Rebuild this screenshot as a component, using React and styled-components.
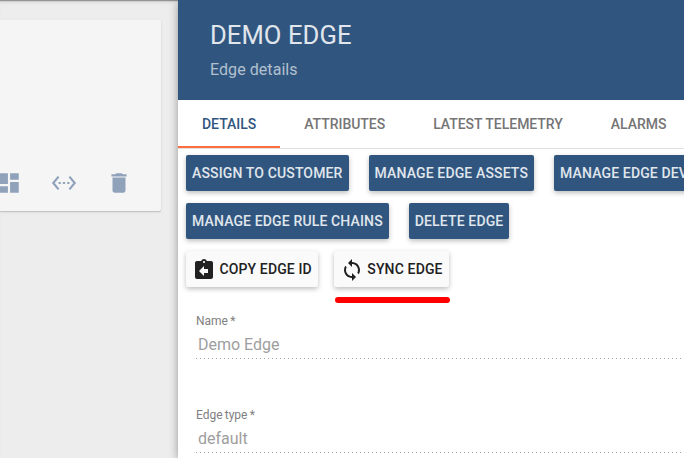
import React from 'react';
import styled, { createGlobalStyle } from 'styled-components';

const PRIMARY = '#305680';

const GlobalStyle = createGlobalStyle`
  *, *::before, *::after { box-sizing: border-box; }
  html, body { margin: 0; height: 100%; overflow: hidden; }
  body { font-family: Roboto, "Liberation Sans", sans-serif; background: #ededed; }
`;

const Page = styled.div`
  display: flex;
  height: 458px;
  width: 684px;
  overflow: hidden;
  background: #ededed;
`;

const Backdrop = styled.section`
  flex: 0 0 178px;
  padding-top: 18px;
  border-top: 1px solid #949494;
  box-shadow: inset 0 1px 0 #d0d0d0, inset 0 3px 3px -1px #dedede;
`;

const EntityCard = styled.article`
  display: flex;
  align-items: flex-end;
  width: 161px;
  height: 191px;
  margin-top: 1px;
  padding-bottom: 15px;
  background: #f5f5f5;
  border-radius: 0 2px 2px 0;
  box-shadow: 0 1px 3px rgba(0, 0, 0, 0.1), 0 1px 1px rgba(0, 0, 0, 0.12);
`;

const CardActions = styled.div`
  display: flex;
  gap: 28.6px;
  margin-left: -3.6px;
  color: #8fa2ba;
`;

const Icon = styled.svg`
  display: block;
  flex: none;
  width: ${(p) => p.$size}px;
  height: ${(p) => p.$size}px;
  fill: currentColor;
`;

const Panel = styled.main`
  position: relative;
  flex: 0 0 506px;
  overflow: visible;
  background: #fff;
  box-shadow: 0 2px 9px rgba(0, 0, 0, 0.36);
`;

const Header = styled.header`
  height: 100px;
  padding: 20px 32px 0;
  background: ${PRIMARY};
`;

const Title = styled.h1`
  margin: 0;
  font-size: 25.6px;
  font-weight: 400;
  line-height: 30px;
  letter-spacing: 0.06px;
  color: #e1e6ec;
`;

const Subtitle = styled.p`
  margin: 10px 0 0;
  font-size: 16px;
  line-height: 20px;
  letter-spacing: 0.06px;
  color: #b3c0ce;
`;

const Tabs = styled.nav`
  display: flex;
  height: 49px;
  border-bottom: 1px solid #e0e0e0;
`;

const Tab = styled.div`
  flex: none;
  height: 48px;
  padding: 0 24px;
  font-size: 14px;
  font-weight: 500;
  line-height: 48px;
  letter-spacing: -0.03px;
  white-space: nowrap;
  color: ${(p) => (p.$active ? PRIMARY : '#757575')};
  border-bottom: 2px solid ${(p) => (p.$active ? '#ff6e40' : 'transparent')};
`;

const ActionRow = styled.div`
  display: flex;
  gap: ${(p) => p.$gap}px;
  padding: 6px 8px;
`;

const Button = styled.button`
  display: flex;
  flex: none;
  align-items: center;
  height: 36px;
  padding: 0 6px;
  border: 0;
  border-radius: 2px;
  font: 500 14px/36px Roboto, sans-serif;
  letter-spacing: 0.14px;
  white-space: nowrap;
  color: ${(p) => (p.$plain ? '#212121' : '#e0e6ec')};
  background: ${(p) => (p.$plain ? '#fafafa' : PRIMARY)};
  box-shadow: 0 2px 5px rgba(0, 0, 0, 0.26);
  & > svg { margin: 2px 3.4px 0 0; }
`;

const SyncGroup = styled.div`
  position: relative;
`;

const Underline = styled.div`
  position: absolute;
  left: 1px;
  top: 46px;
  width: 115px;
  height: 6px;
  border-radius: 3px;
  background: #f00;
`;

const Field = styled.label`
  display: block;
  height: 94px;
  margin-left: 18px;
`;

const Form = styled.form`
  padding-top: 20px;
`;

const FieldLabel = styled.span`
  display: block;
  height: 16px;
  font-size: 12px;
  line-height: 16px;
  word-spacing: -0.8px;
  color: #808080;
`;

const FieldValue = styled.span`
  display: block;
  height: 30px;
  padding: 1px 2px 0;
  font-size: 16px;
  line-height: 30px;
  color: #9e9e9e;
  background: linear-gradient(to right, #a3a3a3 0 25%, transparent 25%) 0 100% / 4px 1px repeat-x;
`;

const PATHS = {
  dashboard: 'M3 13h8V3H3v10zm0 8h8v-6H3v6zm10 0h8V11h-8v10zm0-18v6h8V3h-8z',
  ethernet:
    'M7.77 6.76L6.23 5.48.82 12l5.41 6.52 1.54-1.28L3.42 12l4.35-5.24zM7 13h2v-2H7v2zm10-2h-2v2h2v-2zm-6 2h2v-2h-2v2zm6.77-7.52l-1.54 1.28L20.58 12l-4.35 5.24 1.54 1.28L23.18 12l-5.41-6.52z',
  trash:
    'M6 19c0 1.1.9 2 2 2h8c1.1 0 2-.9 2-2V7H6v12zM19 4h-3.5l-1-1h-5l-1 1H5v2h14V4z',
  copy:
    'M19 3h-4.18C14.4 1.84 13.3 1 12 1c-1.3 0-2.4.84-2.82 2H5c-1.1 0-2 .9-2 2v14c0 1.1.9 2 2 2h14c1.1 0 2-.9 2-2V5c0-1.1-.9-2-2-2zm-7 0c.55 0 1 .45 1 1s-.45 1-1 1-1-.45-1-1 .45-1 1-1zm4 12h-4v3l-5-5 5-5v3h4v4z',
  sync:
    'M12 4V1L8 5l4 4V6c3.31 0 6 2.69 6 6 0 1.01-.25 1.97-.7 2.8l1.46 1.46C19.54 15.03 20 13.57 20 12c0-4.42-3.58-8-8-8zm0 14c-3.31 0-6-2.69-6-6 0-1.01.25-1.97.7-2.8L5.24 7.74C4.46 8.97 4 10.43 4 12c0 4.42 3.58 8 8 8v3l4-4-4-4v3z',
};

function Glyph({ name, size = 24 }) {
  return (
    <Icon $size={size} viewBox="0 0 24 24" aria-hidden="true">
      <path d={PATHS[name]} />
    </Icon>
  );
}

const TABS = ['DETAILS', 'ATTRIBUTES', 'LATEST TELEMETRY', 'ALARMS'];

export default function App() {
  return (
    <Page>
      <GlobalStyle />
      <Backdrop>
        <EntityCard>
          <CardActions>
            <Glyph name="dashboard" size={26} />
            <Glyph name="ethernet" size={26} />
            <Glyph name="trash" size={26} />
          </CardActions>
        </EntityCard>
      </Backdrop>
      <Panel>
        <Header>
          <Title>DEMO EDGE</Title>
          <Subtitle>Edge details</Subtitle>
        </Header>
        <Tabs>
          {TABS.map((t, i) => (
            <Tab key={t} $active={i === 0}>{t}</Tab>
          ))}
        </Tabs>
        <ActionRow $gap={20}>
          <Button>ASSIGN TO CUSTOMER</Button>
          <Button>MANAGE EDGE ASSETS</Button>
          <Button>MANAGE EDGE DEVICES</Button>
        </ActionRow>
        <ActionRow $gap={20}>
          <Button>MANAGE EDGE RULE CHAINS</Button>
          <Button>DELETE EDGE</Button>
        </ActionRow>
        <ActionRow $gap={16}>
          <Button $plain><Glyph name="copy" />COPY EDGE ID</Button>
          <SyncGroup>
            <Button $plain><Glyph name="sync" />SYNC EDGE</Button>
            <Underline />
          </SyncGroup>
        </ActionRow>
        <Form>
          <Field>
            <FieldLabel>Name *</FieldLabel>
            <FieldValue>Demo Edge</FieldValue>
          </Field>
          <Field>
            <FieldLabel>Edge type *</FieldLabel>
            <FieldValue>default</FieldValue>
          </Field>
        </Form>
      </Panel>
    </Page>
  );
}
